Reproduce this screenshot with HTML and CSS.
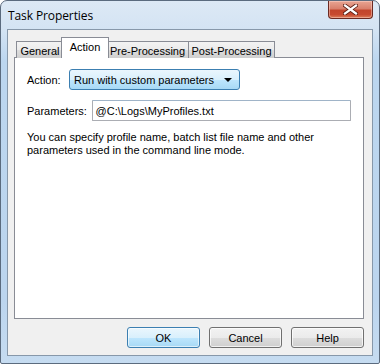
FILE: index.html
```html
<!DOCTYPE html>
<html>
<head>
<meta charset="utf-8">
<link rel="stylesheet" href="styles.css">
</head>
<body>
<div class="window">
  <div class="titlebar">
    <div class="title">Task Properties</div>
    <div class="close">
      <svg width="15" height="11" viewBox="0 0 15 11"><path d="M2 1.5 L13 9.5 M13 1.5 L2 9.5" stroke="#5a1e14" stroke-width="4" stroke-linecap="square" fill="none"/><path d="M2 1.5 L13 9.5 M13 1.5 L2 9.5" stroke="#ffffff" stroke-width="2.2" stroke-linecap="square" fill="none"/></svg>
    </div>
  </div>
  <div class="client">
    <div class="tabs">
      <div class="tab t-general">General</div>
      <div class="tab t-action selected">Action</div>
      <div class="tab t-pre">Pre-Processing</div>
      <div class="tab t-post">Post-Processing</div>
    </div>
    <div class="panel">
      <div class="row">
        <span class="label l-action">Action:</span>
        <div class="combo">
          <span class="combo-text">Run with custom parameters</span>
          <span class="arrow"></span>
        </div>
      </div>
      <div class="row row-params">
        <span class="label l-params">Parameters:</span>
        <div class="textbox">@C:\Logs\MyProfiles.txt</div>
      </div>
      <p class="desc">You can specify profile name, batch list file name and other<br>parameters used in the command line mode.</p>
    </div>
    <div class="buttons">
      <div class="btn default">OK</div>
      <div class="btn">Cancel</div>
      <div class="btn">Help</div>
    </div>
  </div>
</div>
</body>
</html>
```

FILE: styles.css
```css
html, body {
  margin: 0;
  padding: 0;
  background: #ffffff;
}
.window {
  width: 380px;
  height: 364px;
  box-sizing: border-box;
  border: 1px solid #5b6b7e;
  border-radius: 7px 7px 2px 2px;
  background: linear-gradient(to bottom, #dde9f5 0px, #d3e3f3 30px, #bcd6ef 60px, #bcd5ee 300px, #c6dcf1 364px);
  display: flex;
  flex-direction: column;
  font-family: "Liberation Sans", Arial, sans-serif;
  font-size: 11px;
  color: #000;
  overflow: hidden;
}
.titlebar {
  height: 28px;
  display: flex;
  justify-content: space-between;
  align-items: flex-start;
}
.title {
  font-family: "Open Sans", "Noto Sans", sans-serif;
  font-size: 12px;
  padding: 6px 0 0 7px;
  color: #000;
  letter-spacing: -0.1px;
}
.close {
  width: 45px;
  height: 18px;
  margin-right: 6px;
  box-sizing: border-box;
  border: 1px solid #6b2a22;
  border-top: none;
  border-radius: 0 0 4px 4px;
  background: linear-gradient(to bottom, #e8a593 0%, #d8806c 45%, #c2452c 55%, #c74a30 80%, #dc7e5a 100%);
  display: flex;
  align-items: center;
  justify-content: center;
  box-shadow: inset 0 0 0 1px rgba(255,220,210,0.45);
}
.close svg { display: block; }
.client {
  margin: 0 6px 7px 6px;
  flex: 1;
  border: 1px solid #8798aa;
  background: #f0f0f0;
  display: flex;
  flex-direction: column;
  padding: 7px 7px 0 6px;
}
.tabs {
  display: flex;
  align-items: flex-end;
  height: 21px;
  padding-left: 2px;
  margin-bottom: -1px;
  position: relative;
  z-index: 2;
}
.tab {
  height: 17px;
  box-sizing: border-box;
  border: 1px solid #898c95;
  border-bottom: none;
  background: linear-gradient(to bottom, #f3f3f3 0%, #ebebeb 50%, #dddddd 51%, #cfcfcf 100%);
  display: flex;
  align-items: center;
  justify-content: center;
  margin-right: -1px;
  padding-top: 1px;
}
.t-general { width: 48px; }
.t-action { width: 43px; }
.t-pre { width: 83px; }
.t-post { width: 87px; }
.tab.selected {
  height: 21px;
  background: #ffffff;
  margin: 0 -3px 0 -2px;
  width: 48px;
  position: relative;
  z-index: 3;
  padding-top: 0;
  padding-bottom: 2px;
}
.panel {
  height: 262px;
  box-sizing: border-box;
  margin-right: 1px;
  border: 1px solid #898c95;
  background: #ffffff;
  padding: 11px 12px 0 12px;
}
.row {
  display: flex;
  align-items: center;
  height: 21px;
}
.label.l-action { width: 42px; }
.label.l-params { width: 65px; }
.row-params {
  margin-top: 10px;
}
.combo {
  width: 171px;
  height: 21px;
  box-sizing: border-box;
  border: 1px solid #3c7fb1;
  border-radius: 3px;
  background: linear-gradient(to bottom, #eaf6fd 0%, #d9f0fc 50%, #bee6fd 51%, #a7d9f5 100%);
  display: flex;
  align-items: center;
  justify-content: space-between;
  padding: 0 7px 0 4px;
}
.arrow {
  width: 0;
  height: 0;
  border-left: 4px solid transparent;
  border-right: 4px solid transparent;
  border-top: 4px solid #000;
}
.textbox {
  width: 261px;
  height: 21px;
  box-sizing: border-box;
  border: 1px solid #abadb3;
  border-top-color: #a0b4c8;
  border-radius: 1px;
  background: #fff;
  padding: 0 0 0 3px;
  display: flex;
  align-items: center;
}
.desc {
  margin: 10px 0 0 0;
  line-height: 13px;
}
.buttons {
  display: flex;
  justify-content: flex-end;
  gap: 9px;
  margin-top: 8px;
  margin-right: 1px;
}
.btn {
  width: 73px;
  height: 21px;
  box-sizing: border-box;
  border: 1px solid #707070;
  border-radius: 3px;
  background: linear-gradient(to bottom, #f2f2f2 0%, #ebebeb 50%, #dddddd 51%, #cfcfcf 100%);
  box-shadow: inset 0 0 0 1px rgba(255,255,255,0.7);
  display: flex;
  align-items: center;
  justify-content: center;
}
.btn.default {
  border-color: #3c7fb1;
  background: linear-gradient(to bottom, #eaf6fd 0%, #d9f0fc 50%, #bee6fd 51%, #a7d9f5 100%);
  box-shadow: inset 0 0 0 1px rgba(255,255,255,0.6);
}
```
